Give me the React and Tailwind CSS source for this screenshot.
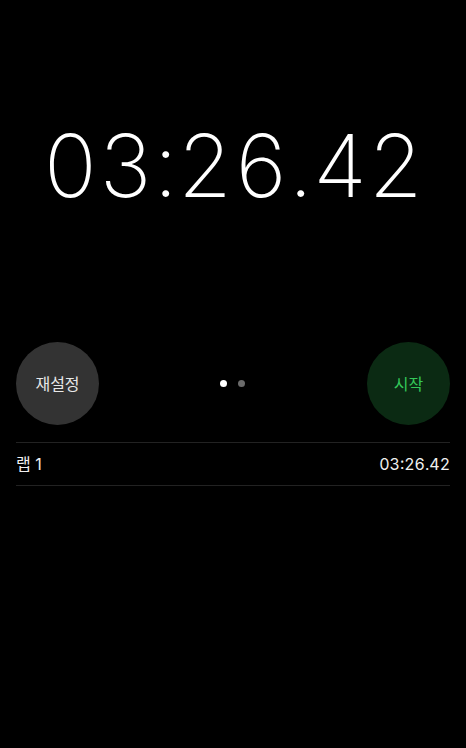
import React from 'react';

const font = { fontFamily: '"Inter", "Noto Sans CJK KR", sans-serif' };

export default function App() {
  return (
    <div className="w-[466px] h-[748px] bg-black text-white flex flex-col" style={font}>
      <div className="h-[342px] flex justify-center pt-[114px]">
        <div className="text-[87px] leading-[104px] font-extralight tracking-[-0.3px] tabular-nums">03:26.42</div>
      </div>

      <div className="px-4 flex items-center justify-between">
        <button className="w-[83px] h-[83px] rounded-full bg-[#333333] text-[16px] text-[#e8e8e8] flex items-center justify-center">
          재설정
        </button>
        <div className="flex items-center gap-[11px] pr-[1px]">
          <span className="w-[7px] h-[7px] rounded-full bg-white" />
          <span className="w-[7px] h-[7px] rounded-full bg-[#6b6b6b]" />
        </div>
        <button className="w-[83px] h-[83px] rounded-full bg-[#0b2a13] text-[16px] text-[#34c759] flex items-center justify-center">
          시작
        </button>
      </div>

      <div className="mx-4 mt-[17px] border-t border-b border-[#222222] h-[44px] flex items-center justify-between text-[16px] text-[#f0f0f0]">
        <span>랩 1</span>
        <span className="tabular-nums">03:26.42</span>
      </div>
    </div>
  );
}
